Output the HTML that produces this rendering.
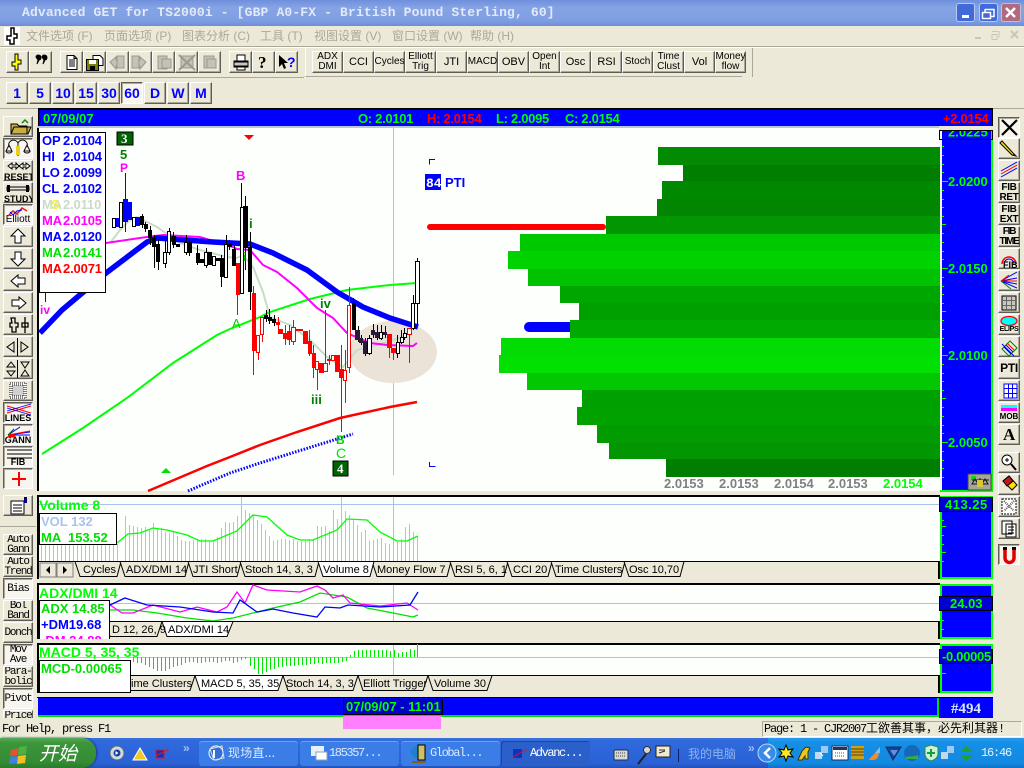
<!DOCTYPE html>
<html><head><meta charset="utf-8"><title>Advanced GET</title>
<style>
html,body{margin:0;padding:0;background:#ece9d8}
#r{position:relative;width:1024px;height:768px;overflow:hidden;background:#ece9d8;font-family:"Liberation Sans","Noto Sans CJK SC",sans-serif}
.a{position:absolute;white-space:pre}
.b{position:absolute;box-sizing:border-box;background:#ece9d8;border:1px solid;border-color:#fff #5f5d54 #5f5d54 #fff;box-shadow:inset -1px -1px #aca899;text-align:center;color:#000;font-size:10px;line-height:10px;white-space:pre;overflow:hidden}
.p{background:#f7f5ee;border-color:#5f5d54 #fff #fff #5f5d54;box-shadow:inset 1px 1px #aca899}
.t{width:31px;height:22px;top:51px;display:flex;align-items:center;justify-content:center}
.f{width:22px;height:22px;top:82px;color:#0000ff;font-weight:bold;font-size:14px;line-height:20px}
.l{left:3px;width:30px;height:21px;font:bold 9px/10px "Liberation Sans",sans-serif;padding-top:10px}
.m{left:3px;width:30px;height:21px;font:11px/10px "Liberation Mono",monospace;letter-spacing:-1.2px;display:flex;align-items:center;justify-content:center}
.r{left:998px;width:22px;height:21px;font:bold 10px/10px "Liberation Sans",sans-serif;padding-top:0;letter-spacing:-.3px}
.mn{top:29px;font-size:12px;line-height:14px;color:#aca899}
svg{position:absolute;left:0;top:0}
.bd{font-weight:bold;font-family:"Liberation Sans",sans-serif}
.tb{font:11px "Liberation Sans",sans-serif;fill:#000}
.ib{position:absolute;box-sizing:border-box;background:#fff;border:1px solid #000;overflow:hidden;font:bold 13px/16px "Liberation Sans",sans-serif}
.ib div{white-space:pre}
.tk{position:absolute;top:741px;height:25px;border-radius:3px;box-sizing:border-box;background:#3b7de6;color:#dde8ff;font:12px/24px "Liberation Mono","Noto Sans CJK SC",monospace;letter-spacing:-1.4px;padding-left:29px;white-space:pre;box-shadow:inset 0 1px #6ea0f0}
.ms{letter-spacing:-1.2px}
</style></head><body><div id="r">

<!-- title bar -->
<div class="a" style="left:0;top:0;width:1024px;height:26px;background:linear-gradient(#6f8fdc,#86a4e4 30%,#7f9ee2 80%,#6c8cd8)"></div>
<div class="a" style="left:22px;top:5px;font:bold 13px/16px 'Liberation Mono',monospace;letter-spacing:.15px;color:#e2eafa">Advanced GET for TS2000i - [GBP A0-FX - British Pound Sterling, 60]</div>
<div class="a" style="left:956px;top:3px;width:19px;height:19px;border-radius:3px;background:#4169d8;border:1px solid #b8c8f0;box-sizing:border-box"></div>
<div class="a" style="left:979px;top:3px;width:19px;height:19px;border-radius:3px;background:#4169d8;border:1px solid #b8c8f0;box-sizing:border-box"></div>
<div class="a" style="left:1001px;top:3px;width:20px;height:19px;border-radius:3px;background:#b06a80;border:1px solid #d0b8c8;box-sizing:border-box"></div>

<!-- menu -->
<div class="a" style="left:0;top:46px;width:1024px;height:1px;background:#aca899"></div>
<div class="a" style="left:0;top:47px;width:1024px;height:1px;background:#fff"></div>
<div class="a mn" style="left:26px">文件选项 (F)</div>
<div class="a mn" style="left:104px">页面选项 (P)</div>
<div class="a mn" style="left:182px">图表分析 (C)</div>
<div class="a mn" style="left:260px">工具 (T)</div>
<div class="a mn" style="left:314px">视图设置 (V)</div>
<div class="a mn" style="left:392px">窗口设置 (W)</div>
<div class="a mn" style="left:470px">帮助 (H)</div>

<!-- toolbar frames -->
<div class="a" style="left:0;top:77px;width:304px;height:1px;background:#aca899"></div>
<div class="a" style="left:305px;top:48px;width:1px;height:30px;background:#fff"></div>
<div class="a" style="left:305px;top:76px;width:437px;height:1px;background:#aca899"></div>
<div class="a" style="left:752px;top:48px;width:1px;height:29px;background:#aca899"></div>
<div class="a" style="left:0;top:108px;width:1024px;height:1px;background:#aca899"></div>

<!-- toolbar 1 buttons -->
<div class="b" style="left:6px;top:51px;width:23px;height:22px"></div>
<div class="b" style="left:29px;top:51px;width:23px;height:22px"></div>
<div class="b" style="left:60px;top:51px;width:23px;height:22px"></div>
<div class="b" style="left:83px;top:51px;width:23px;height:22px"></div>
<div class="b" style="left:106px;top:51px;width:23px;height:22px"></div>
<div class="b" style="left:129px;top:51px;width:23px;height:22px"></div>
<div class="b" style="left:152px;top:51px;width:23px;height:22px"></div>
<div class="b" style="left:175px;top:51px;width:23px;height:22px"></div>
<div class="b" style="left:198px;top:51px;width:23px;height:22px"></div>
<div class="b" style="left:229px;top:51px;width:23px;height:22px"></div>
<div class="b" style="left:252px;top:51px;width:23px;height:22px"></div>
<div class="b" style="left:275px;top:51px;width:23px;height:22px"></div>

<!-- toolbar 2 -->
<div class="b t" style="left:312px">ADX
DMI</div>
<div class="b t" style="left:343px;font-size:11px">CCI</div>
<div class="b t" style="left:374px;font-size:10px">Cycles</div>
<div class="b t" style="left:405px">Elliott
Trig</div>
<div class="b t" style="left:436px;font-size:11px">JTI</div>
<div class="b t" style="left:467px;font-size:10px">MACD</div>
<div class="b t" style="left:498px;font-size:11px">OBV</div>
<div class="b t" style="left:529px">Open
Int</div>
<div class="b t" style="left:560px;font-size:11px">Osc</div>
<div class="b t" style="left:591px;font-size:11px">RSI</div>
<div class="b t" style="left:622px;font-size:10px">Stoch</div>
<div class="b t" style="left:653px">Time
Clust</div>
<div class="b t" style="left:684px;font-size:11px">Vol</div>
<div class="b t" style="left:715px">Money
flow</div>

<!-- timeframe -->
<div class="b f" style="left:6px">1</div>
<div class="b f" style="left:29px">5</div>
<div class="b f" style="left:52px">10</div>
<div class="b f" style="left:75px">15</div>
<div class="b f" style="left:98px">30</div>
<div class="b f p" style="left:121px">60</div>
<div class="b f" style="left:144px">D</div>
<div class="b f" style="left:167px">W</div>
<div class="b f" style="left:190px">M</div>

<!-- left bar -->
<div class="b l" style="top:116px"></div>
<div class="b l p" style="top:138px"></div>
<div class="b l" style="top:160px;padding-top:11px">RESET</div>
<div class="b l" style="top:182px;padding-top:11px">STUDY</div>
<div class="b l p" style="top:204px;padding-top:10px;font-weight:normal;font-size:10px">Elliott</div>
<div class="b l" style="top:226px"></div>
<div class="b l" style="top:248px"></div>
<div class="b l" style="top:270px"></div>
<div class="b l" style="top:292px"></div>
<div class="b l" style="top:314px"></div>
<div class="b l" style="top:336px"></div>
<div class="b l" style="top:358px"></div>
<div class="b l" style="top:380px"></div>
<div class="b l p" style="top:402px;padding-top:10px">LINES</div>
<div class="b l p" style="top:424px;padding-top:10px">GANN</div>
<div class="b l p" style="top:446px;padding-top:10px">FIB</div>
<div class="b l p" style="top:468px"></div>
<div class="b l" style="top:495px"></div>
<div class="a" style="left:0;top:526px;width:36px;height:1px;background:#aca899"></div>
<div class="b m" style="top:534px">Auto
Gann</div>
<div class="b m" style="top:556px">Auto
Trend</div>
<div class="b m p" style="top:578px">Bias</div>
<div class="b m" style="top:600px">Bol
Band</div>
<div class="b m" style="top:622px">Donch</div>
<div class="b m p" style="top:644px">Mov
Ave</div>
<div class="b m" style="top:666px">Para-
bolic</div>
<div class="b m p" style="top:688px">Pivot</div>
<div class="b m" style="top:710px;height:8px;align-items:flex-start;border-bottom:0;box-shadow:none">Price</div>

<!-- right bar -->
<div class="b r p" style="top:117px"></div>
<div class="b r" style="top:138px"></div>
<div class="b r" style="top:160px"></div>
<div class="b r" style="top:182px">FIB
RET</div>
<div class="b r" style="top:204px">FIB
EXT</div>
<div class="b r" style="top:226px;letter-spacing:-1.2px">FIB
TIME</div>
<div class="b r" style="top:248px"></div>
<div class="b r" style="top:270px"></div>
<div class="b r" style="top:292px"></div>
<div class="b r" style="top:314px;padding-top:11px;font-size:7px;line-height:8px">ELIPS</div>
<div class="b r" style="top:336px"></div>
<div class="b r" style="top:358px;font:bold 12px/19px 'Liberation Sans',sans-serif">PTI</div>
<div class="b r" style="top:380px"></div>
<div class="b r" style="top:402px;padding-top:9px;font-size:8px;letter-spacing:0">MOB</div>
<div class="b r" style="top:424px;font:bold 17px/19px 'Liberation Serif',serif">A</div>
<div class="b r" style="top:452px"></div>
<div class="b r" style="top:474px"></div>
<div class="b r" style="top:496px"></div>
<div class="b r" style="top:518px"></div>
<div class="b r p" style="top:544px"></div>

<!-- status + taskbar bases -->
<div class="a" style="left:0;top:738px;width:1024px;height:30px;background:linear-gradient(#3a72dc,#2f69dc 10%,#2a62d6 85%,#2450b4)"></div>
<div class="a" style="left:768px;top:738px;width:256px;height:30px;background:linear-gradient(#2a9aee,#1590e6 15%,#1388e0 85%,#1070c8)"></div>
<div class="a" style="left:0;top:738px;width:96px;height:30px;border-radius:0 14px 14px 0;background:linear-gradient(#56ab56,#3c963c 15%,#348c34 80%,#2a7a2a);box-shadow:1px 0 2px #153a80"></div>
<div class="a" style="left:39px;top:741px;font:italic 19px/24px 'Noto Sans CJK SC',sans-serif;color:#fff">开始</div>
<div class="tk" style="left:199px;width:99px;font-family:'Noto Sans CJK SC',sans-serif;font-size:12px;letter-spacing:.2px">现场直...</div>
<div class="tk" style="left:300px;width:99px">185357...</div>
<div class="tk" style="left:401px;width:99px">Global...</div>
<div class="tk" style="left:501px;width:89px;background:#2b5fca;box-shadow:inset 1px 1px #1d459c;color:#fff">Advanc...</div>
<div class="a" style="left:688px;top:746px;font:12px/16px 'Noto Sans CJK SC',sans-serif;color:#8db2ec">我的电脑</div>
<div class="a" style="left:748px;top:741px;font:bold 12px/14px 'Liberation Sans',sans-serif;color:#9cc0f4">»</div>
<div class="a" style="left:183px;top:741px;font:bold 12px/14px 'Liberation Sans',sans-serif;color:#9cc0f4">»</div>
<div class="a" style="left:981px;top:745px;font:12px/16px 'Liberation Mono',monospace;letter-spacing:-1.2px;color:#e6f2ff">16:46</div>

<div class="a" style="left:2px;top:722px;font:12px/15px 'Liberation Mono',monospace;letter-spacing:-1.2px;color:#000">For Help, press F1</div>
<div class="a" style="left:762px;top:721px;width:260px;height:16px;box-sizing:border-box;border:1px solid;border-color:#aca899 #fff #fff #aca899;font:12px/14px 'Liberation Mono','Noto Sans CJK SC',monospace;padding-left:1px;color:#000;overflow:hidden"><span class="ms">Page: 1 - CJR2007</span>工欲善其事，必先利其器<span class="ms">!</span></div>

<svg width="1024" height="768" viewBox="0 0 1024 768" xmlns="http://www.w3.org/2000/svg">
<defs>
<pattern id="vb" x="1" y="0" width="4" height="20" patternUnits="userSpaceOnUse"><rect x="0" y="0" width="1" height="20" fill="#a8c4ec"/></pattern>
</defs>

<!-- header bar -->
<g shape-rendering="crispEdges">
<rect x="38" y="108" width="955" height="18" fill="#000"/>
<rect x="39" y="110" width="953" height="16" fill="#0000ff"/>
<!-- main chart -->
<rect x="37" y="126" width="903" height="365" fill="#fdfffd"/>
<rect x="37" y="126" width="2" height="365" fill="#000"/>
<rect x="37" y="126" width="903" height="2" fill="#b8c8d8"/>
<rect x="393" y="128" width="1" height="347" fill="#a8c4ec"/>
</g>
<ellipse cx="393" cy="352" rx="44" ry="31" fill="#ece3d8"/>

<!-- green profile bars -->
<g shape-rendering="crispEdges">
<rect x="658" y="147" width="282" height="18" fill="#028a02"/>
<rect x="683" y="165" width="257" height="16" fill="#007e00"/>
<rect x="662" y="181" width="278" height="18" fill="#018801"/>
<rect x="657" y="199" width="283" height="17" fill="#028602"/>
<rect x="606" y="216" width="334" height="18" fill="#029602"/>
<rect x="520" y="234" width="420" height="17" fill="#00c800"/>
<rect x="508" y="251" width="432" height="18" fill="#00d200"/>
<rect x="528" y="269" width="412" height="17" fill="#00c200"/>
<rect x="560" y="286" width="380" height="17" fill="#00a600"/>
<rect x="579" y="303" width="361" height="17" fill="#00a000"/>
<rect x="570" y="320" width="370" height="18" fill="#00aa00"/>
<rect x="501" y="338" width="439" height="17" fill="#02dc02"/>
<rect x="499" y="355" width="441" height="18" fill="#02e002"/>
<rect x="527" y="373" width="413" height="17" fill="#02c802"/>
<rect x="582" y="390" width="358" height="17" fill="#00a000"/>
<rect x="577" y="407" width="363" height="18" fill="#00a200"/>
<rect x="597" y="425" width="343" height="18" fill="#029c02"/>
<rect x="609" y="443" width="331" height="16" fill="#029602"/>
<rect x="666" y="459" width="274" height="18" fill="#007e00"/>
</g>
<rect x="427" y="224" width="179" height="6" rx="3" fill="#ff0000"/>
<rect x="524" y="322" width="46" height="10" rx="5" fill="#0000ff"/>
<rect x="560" y="322" width="10" height="10" fill="#0000ff"/>
<path d="M435 159.500h-5.500v5M429.500 462v4.500h6" fill="none" stroke="#0000ff"/>
<rect x="425" y="174" width="16" height="16" fill="#0000ff"/>
<text x="426" y="187" class="bd" font-size="13" fill="#fff" style="font-family:'Liberation Mono',monospace">84</text>
<text x="445" y="187" class="bd" font-size="13" fill="#0000ff">PTI</text>
<g class="bd" font-size="13" fill="#808080">
<text x="664" y="488">2.0153</text><text x="719" y="488">2.0153</text><text x="774" y="488">2.0154</text><text x="828" y="488">2.0153</text><text x="883" y="488" fill="#00ff00">2.0154</text>
</g>

<!-- moving averages -->
<polyline points="110 243 120 230 130 220 137 217 157 227 180 243 200 250 227 257 237 258 243 255 253 267 263 292 270 317 290 325 310 340 327 357 343 367 357 350 370 347 403 337 413 328" fill="none" stroke="#c8dcc8" stroke-width="2"/>
<polyline points="148 491 207 466 230 457 260 445 297 432 340 418 390 407 417 402" fill="none" stroke="#ff0000" stroke-width="2.500"/>
<polyline points="42 454 83 428 127 398 173 363 217 335 230 329 260 317 270 312 310 299 347 290 390 285 417 283" fill="none" stroke="#00ff00" stroke-width="2"/>
<polyline points="188 491 230 473 260 463 353 434" fill="none" stroke="#0000ff" stroke-width="3" stroke-dasharray="1.500 1.500"/>
<polyline points="106 243 147 237 163 235 200 237 233 247 237 249 250 250 263 265 277 272 297 288 317 308 333 318 347 333 370 343 387 345 413 346 417 343" fill="none" stroke="#ff00ff" stroke-width="2"/>
<polyline points="40 333 62 310 106 273 147 242 157 238 213 242 250 244 273 253 307 270 337 292 363 307 390 318 418 327" fill="none" stroke="#0000ff" stroke-width="5.500"/>

<!-- wicks -->
<g shape-rendering="crispEdges" stroke-width="1" fill="none">
<path stroke="#0000ff" d="M125.500 173V232M45.500 292V302"/>
<path stroke="#000" d="M142.500 214V228M145.500 222V232M150.500 226V245M154.500 235V268M158.500 240V270M165.500 240V268M169.500 228V255M173.500 232V248M186.500 235V255M189.500 238V256M197.500 245V265M206.500 248V268M221.500 255V287M226.500 235V278M229.500 240V250M234.500 245V266M241.500 183V294M245.500 196V270M250.500 232V310M266.500 310V322M269.500 309V324M274.500 315V326M353.500 298V330M358.500 326V342M361.500 335V345M365.500 338V356M369.500 335V355M373.500 324V338M377.500 325V340M381.500 325V340M385.500 326V338M397.500 335V358M401.500 330V344M404.500 328V340M413.500 295V330M417.500 258V324"/>
<path stroke="#ff0000" d="M237.500 295V315M253.500 286V375M258.500 353V360M262.500 335V342M278.500 317V334M285.500 325V345M289.500 325V345M293.500 320V345M309.500 330V356M313.500 345V378M317.500 363V390M325.500 310V363M329.500 355V365M341.500 345V432M345.500 350V403M349.500 287V373M389.500 348V358M393.500 353V360M409.500 334V363"/>
</g>
<!-- bodies -->
<g shape-rendering="crispEdges">
<path fill="#000" d="M140 216h4v9h-4zM144 224h4v5h-4zM148 230h4v8h-4zM152 238h4v9h-4zM156 244h4v18h-4zM172 236h4v9h-4zM176 244h4v3h-4zM188 242h4v11h-4zM196 253h4v10h-4zM200 259h4v4h-4zM208 252h4v13h-4zM216 258h4v3h-4zM220 258h4v19h-4zM228 244h4v3h-4zM232 249h4v17h-4zM243 206h5v42h-5zM248 247h4v45h-4zM264 315h4v4h-4zM268 317h4v4h-4zM272 319h4v4h-4zM352 303h4v27h-4z"/>
<path fill="#2a1a3a" d="M355 330h5v10h-5zM359 338h4v5h-4zM363 341h4v13h-4zM371 330h4v5h-4zM375 332h4v6h-4zM383 332h4v3h-4z"/>
<path fill="#0000ff" d="M116 218h4v9h-4zM123 199h5v23h-5zM128 202h4v18h-4zM136 217h4v9h-4z"/>
<path fill="#ff0000" d="M236 263h4v32h-4zM252 293h4v58h-4zM276 322h4v3h-4zM279 329h4v5h-4zM283 333h4v6h-4zM287 331h4v9h-4zM296 329h3v2h-3zM299 329h4v2h-4zM303 331h5v13h-5zM308 341h4v13h-4zM312 353h4v15h-4zM319 363h5v10h-5zM327 359h5v2h-5zM335 355h5v17h-5zM339 369h5v9h-5zM387 334h5v14h-5zM391 348h5v5h-5z"/>
<path fill="#fff" stroke="#000" d="M112.500 218.500h3v9h-3zM119.500 202.500h3v25h-3zM132.500 217.500h3v9h-3zM163.500 252.500h3v11h-3zM167.500 231.500h3v21h-3zM184.500 242.500h3v10h-3zM204.500 252.500h3v13h-3zM212.500 256.500h3v9h-3zM224.500 244.500h3v33h-3zM240.500 207.500h3v86h-3zM367.500 338.500h4v15h-4zM379.500 332.500h3v6h-3zM396.500 342.500h3v11h-3zM400.500 337.500h3v5h-3zM403.500 333.500h3v4h-3zM411.500 303.500h3v25h-3zM415.500 261.500h4v42h-4z"/>
<path fill="#fff" stroke="#ff0000" d="M256.500 335.500h3v17h-3zM260.500 317.500h3v17h-3zM291.500 327.500h4v14h-4zM315.500 361.500h3v8h-3zM323.500 363.500h4v8h-4zM331.500 355.500h3v5h-3zM343.500 370.500h3v10h-3zM347.500 305.500h3v62h-3zM407.500 328.500h4v6h-4z"/>
</g>

<!-- labels on chart -->
<rect x="117" y="132" width="16" height="13" fill="#006400" stroke="#000"/>
<text x="121" y="143" class="bd" font-size="13" fill="#fff" style="font-family:'Liberation Serif',serif">3</text>
<text x="120" y="159" class="bd" font-size="13" fill="#008000">5</text>
<text x="120" y="172" class="bd" font-size="12" fill="#ff00ff">P</text>
<text x="236" y="180" class="bd" font-size="13" fill="#ff00ff">B</text>
<text x="249" y="228" class="bd" font-size="13" fill="#008000">i</text>
<text x="243" y="261" class="bd" font-size="12" fill="#00c000">i</text>
<text x="232" y="328" font-size="13" fill="#00d000">A</text>
<text x="40" y="314" class="bd" font-size="12" fill="#ff00ff">iv</text>
<text x="320" y="308" class="bd" font-size="13" fill="#008000">iv</text>
<text x="311" y="404" class="bd" font-size="13" fill="#008000">iii</text>
<text x="336" y="444" class="bd" font-size="12" fill="#00d000">B</text>
<text x="336" y="458" font-size="14" fill="#00e000">C</text>
<rect x="333" y="461" width="15" height="15" fill="#006400" stroke="#000"/>
<text x="337" y="473" class="bd" font-size="13" fill="#fff" style="font-family:'Liberation Serif',serif">4</text>
<path d="M161 473l5-5 5 5z" fill="#00e000"/>
<path d="M244 135h10l-5 5z" fill="#ff0000"/>

<!-- main scale -->
<g shape-rendering="crispEdges">
<rect x="940" y="126" width="53" height="366" fill="#00ff00"/>
<rect x="940" y="128" width="2" height="362" fill="#f0f8f0"/>
<rect x="942" y="128" width="49" height="362" fill="#0000ff"/>
<path stroke="#00ff00" fill="none" d="M942 181.500h6M942 268.500h6M942 355.500h6M942 442.500h6M942 224.500h4M942 311.500h4M942 398.500h4M942 146.500h2M942 155.500h2M942 164.500h2M942 172.500h2M942 190.500h2M942 199.500h2M942 207.500h2M942 216.500h2M942 233.500h2M942 242.500h2M942 251.500h2M942 259.500h2M942 277.500h2M942 286.500h2M942 294.500h2M942 303.500h2M942 320.500h2M942 329.500h2M942 338.500h2M942 346.500h2M942 364.500h2M942 373.500h2M942 381.500h2M942 390.500h2M942 407.500h2M942 416.500h2M942 425.500h2M942 433.500h2M942 451.500h2M942 460.500h2M942 468.500h2M942 477.500h2"/>
</g>
<g class="bd" font-size="13" fill="#00ff00">
<text x="948" y="186">2.0200</text><text x="948" y="273">2.0150</text><text x="948" y="360">2.0100</text><text x="948" y="447">2.0050</text>
<text x="948" y="136.500">2.0225</text>
</g>
<rect x="939" y="126" width="54" height="5" fill="#ece9d8"/>
<rect x="939.500" y="130.500" width="53" height="9" fill="none" stroke="#000"/>
<!-- bias icon -->
<rect x="968" y="474" width="23" height="16" fill="#a8a69c" stroke="#444"/>
<rect x="971" y="476" width="5" height="4" fill="#00e000"/>
<path d="M972 484l3-5 3 5zM982 484l3-5 3 5zM972 480h17M980 478v9" fill="none" stroke="#111"/>
<rect x="977" y="480" width="6" height="7" fill="#d8c838"/>

<!-- Volume panel -->
<g shape-rendering="crispEdges">
<rect x="37" y="495" width="903" height="84" fill="#fdfffd"/>
<rect x="37" y="495" width="903" height="2" fill="#000"/>
<rect x="37" y="495" width="2" height="84" fill="#000"/>
<path stroke="#a8c4ec" fill="none" d="M39 504.500H940M241.500 497V561M341.500 497V561M393.500 497V561"/>
<rect x="40" y="544" width="78" height="17" fill="url(#vb)"/>
<path stroke="#a8c4ec" fill="none" d="M125.500 561V516M129.500 561V525M133.500 561V526M137.500 561V527M141.500 561V528M145.500 561V527M149.500 561V530M153.500 561V523M157.500 561V528M161.500 561V528M165.500 561V532M169.500 561V533M173.500 561V532M177.500 561V536M181.500 561V540M185.500 561V541M189.500 561V541M193.500 561V540M197.500 561V539M201.500 561V539M205.500 561V539M209.500 561V541M213.500 561V541M217.500 561V537M221.500 561V528M225.500 561V522M229.500 561V523M233.500 561V522M237.500 561V516M241.500 561V501M245.500 561V510M249.500 561V513M253.500 561V515M257.500 561V520M261.500 561V524M265.500 561V530M269.500 561V536M273.500 561V541M277.500 561V540M281.500 561V539M285.500 561V539M289.500 561V540M293.500 561V539M297.500 561V541M301.500 561V541M305.500 561V541M309.500 561V539M313.500 561V540M317.500 561V526M321.500 561V527M325.500 561V526M329.500 561V531M333.500 561V510M337.500 561V519M341.500 561V500M345.500 561V511M349.500 561V515M353.500 561V520M357.500 561V525M361.500 561V532M365.500 561V530M369.500 561V541M373.500 561V540M377.500 561V539M381.500 561V538M385.500 561V543M389.500 561V544M393.500 561V538M397.500 561V542M401.500 561V539M405.500 561V527M409.500 561V524M413.500 561V532M417.500 561V537"/>
</g>
<polyline points="117 543 128 534 140 533 153 528 167 530 187 535 200 541 213 541 237 531 253 515 267 517 287 535 300 540 313 540 337 530 347 519 367 520 380 532 397 541 407 541 418 536" fill="none" stroke="#00ff00" stroke-width="1.300"/>
<g shape-rendering="crispEdges">
<rect x="39" y="561" width="901" height="18" fill="#ece9d8"/>
<rect x="39" y="561" width="900" height="1" fill="#000"/>
<rect x="938" y="561" width="2" height="18" fill="#000"/>
<rect x="40" y="563" width="16" height="14" fill="#ece9d8" stroke="#808080"/>
<rect x="57" y="563" width="16" height="14" fill="#ece9d8" stroke="#808080"/>
</g>
<path d="M50 566v8l-4-4zM63 566v8l4-4z" fill="#000"/>
<g stroke="#000" fill="#ece9d8">
<path d="M75 561.500l5 15h37l4-15z"/>
<path d="M120 561.500l5 15h60l4-15z"/>
<path d="M188 561.500l5 15h44l4-15z"/>
<path d="M240 561.500l5 15h70l4-15z"/>
<path d="M372 561.500l5 15h70l4-15z"/>
<path d="M450 561.500l5 15h49l4-15z"/>
<path d="M507 561.500l5 15h36l4-15z"/>
<path d="M551 561.500l5 15h65l4-15z"/>
<path d="M624 561.500l5 15h51l4-15z"/>
<path d="M318 561.500l5 15h47l4-15z" fill="#fff"/>
</g>
<g class="tb">
<text x="83" y="573">Cycles</text><text x="126" y="573">ADX/DMI 14</text><text x="193" y="573">JTI Short</text><text x="245" y="573">Stoch 14, 3, 3</text><text x="323" y="573">Volume 8</text><text x="377" y="573">Money Flow 7</text><text x="455" y="573">RSI 5, 6, 1</text><text x="513" y="573">CCI 20</text><text x="555" y="573">Time Clusters</text><text x="629" y="573">Osc 10,70</text>
</g>
<text x="39" y="510" class="bd" font-size="14" fill="#00ff00">Volume 8</text>
<g shape-rendering="crispEdges">
<rect x="940" y="496" width="53" height="83" fill="#00ff00"/>
<rect x="942" y="498" width="49" height="79" fill="#0000ff"/>
<rect x="939.500" y="497.500" width="53" height="14" fill="#0000d0" stroke="#000"/>
<path stroke="#00ff00" fill="none" d="M942 526.500h4M942 552.500h4M942 520.500h2M942 535.500h2M942 544.500h2M942 561.500h2"/>
</g>
<text x="945" y="509" class="bd" font-size="13" fill="#00ff00" letter-spacing=".5">413.25</text>

<!-- ADX panel -->
<g shape-rendering="crispEdges">
<rect x="37" y="583" width="903" height="56" fill="#fdfffd"/>
<rect x="37" y="583" width="903" height="2" fill="#000"/>
<rect x="37" y="583" width="2" height="56" fill="#000"/>
<path stroke="#a8c4ec" fill="none" d="M39 603.500H940M393.500 585V621"/>
</g>
<polyline points="110 610 133 610 157 613 187 618 213 621 233 618 273 608 300 602 320 593 347 597 367 608 393 613 413 617 418 615" fill="none" stroke="#00e000" stroke-width="1.300"/>
<polyline points="110 605 122 613 133 613 153 605 180 612 197 607 217 612 227 607 237 592 245 603 253 585 267 590 300 592 317 586 325 590 333 598 343 595 350 603 380 606 407 603 418 610" fill="none" stroke="#ff00ff" stroke-width="1.300"/>
<polyline points="110 605 125 598 147 605 180 607 213 612 233 613 240 600 257 612 273 609 293 613 317 617 325 607 340 608 348 605 380 607 410 605 418 592" fill="none" stroke="#0000ff" stroke-width="1.300"/>
<rect x="39" y="621" width="901" height="18" fill="#ece9d8" shape-rendering="crispEdges"/>
<rect x="39" y="621" width="900" height="1" fill="#000" shape-rendering="crispEdges"/>
<rect x="938" y="621" width="2" height="18" fill="#000" shape-rendering="crispEdges"/>
<path d="M105 621.500l5 15h47l5-15z" fill="#ece9d8" stroke="#000"/>
<path d="M162 621.500l5 15h60l6-15z" fill="#fff" stroke="#000"/>
<text x="112" y="633" class="tb">D 12, 26, 9</text>
<text x="168" y="633" class="tb">ADX/DMI 14</text>
<text x="39" y="598" class="bd" font-size="14" fill="#00ff00">ADX/DMI 14</text>
<g shape-rendering="crispEdges">
<rect x="940" y="584" width="53" height="55" fill="#00ff00"/>
<rect x="942" y="586" width="49" height="51" fill="#0000ff"/>
<rect x="939.500" y="596.500" width="53" height="14" fill="#0000d0" stroke="#000"/>
<path stroke="#00ff00" fill="none" d="M942 620.500h2M942 629.500h2"/>
</g>
<text x="950" y="608" class="bd" font-size="13" fill="#00ff00">24.03</text>

<!-- MACD panel -->
<g shape-rendering="crispEdges">
<rect x="37" y="643" width="903" height="50" fill="#fdfffd"/>
<rect x="37" y="643" width="903" height="2" fill="#000"/>
<rect x="37" y="643" width="2" height="50" fill="#000"/>
<path stroke="#a8c4ec" fill="none" d="M39 657.500H940M393.500 645V675"/>
<path stroke="#00e800" fill="none" d="M133.500 657v5M137.500 657v6M141.500 657v6M145.500 657v8M149.500 657v10M153.500 657v12M157.500 657v14M161.500 657v14M165.500 657v14M169.500 657v12M173.500 657v10M177.500 657v9M181.500 657v8M185.500 657v6M189.500 657v5M193.500 657v5M197.500 657v6M201.500 657v6M205.500 657v5M209.500 657v5M213.500 657v5M217.500 657v6M221.500 657v5M225.500 657v4M229.500 657v4M233.500 657v6M237.500 657v5M241.500 657v3M245.500 657v2M250.500 657v9M254.500 657v12M258.500 657v17M262.500 657v17M266.500 657v15M270.500 657v13M274.500 657v12M278.500 657v10M282.500 657v10M286.500 657v9M290.500 657v9M294.500 657v9M298.500 657v8M302.500 657v8M306.500 657v8M310.500 657v7M314.500 657v7M318.500 657v6M322.500 657v7M326.500 657v6M330.500 657v6M334.500 657v6M338.500 657v6M342.500 657v5M346.500 657v4M350.500 657v-2M354.500 657v-6M358.500 657v-7M362.500 657v-7M366.500 657v-7M370.500 657v-7M374.500 657v-7M378.500 657v-7M382.500 657v-7M386.500 657v-7M390.500 657v-6M394.500 657v-7M398.500 657v-4M402.500 657v-5M406.500 657v-5M410.500 657v-8M414.500 657v-7M417.500 657v-13"/>
<rect x="39" y="675" width="901" height="18" fill="#ece9d8"/>
<rect x="39" y="675" width="900" height="1" fill="#000"/>
<rect x="938" y="675" width="2" height="18" fill="#000"/>
</g>
<path d="M125 675.500l5 15h60l5-15z" fill="#ece9d8" stroke="#000"/>
<path d="M283 675.500l5 15h65l5-15z" fill="#ece9d8" stroke="#000"/>
<path d="M358 675.500l5 15h60l5-15z" fill="#ece9d8" stroke="#000"/>
<path d="M428 675.500l5 15h54l5-15z" fill="#ece9d8" stroke="#000"/>
<path d="M195 675.500l5 15h78l5-15z" fill="#fff" stroke="#000"/>
<g class="tb">
<text x="131" y="687">ime Clusters</text><text x="201" y="687">MACD 5, 35, 35</text><text x="286" y="687">Stoch 14, 3, 3</text><text x="363" y="687">Elliott Trigger</text><text x="434" y="687">Volume 30</text>
</g>
<text x="39" y="657" class="bd" font-size="14" fill="#00ff00">MACD 5, 35, 35</text>
<g shape-rendering="crispEdges">
<rect x="940" y="644" width="53" height="49" fill="#00ff00"/>
<rect x="942" y="646" width="49" height="45" fill="#0000ff"/>
<rect x="939.500" y="649.500" width="53" height="14" fill="#0000d0" stroke="#000"/>
<path stroke="#00ff00" fill="none" d="M942 673.500h4"/>
</g>
<text x="942" y="661" class="bd" font-size="13" fill="#00ff00" letter-spacing="-.3">-0.00005</text>

<!-- bottom bar -->
<g shape-rendering="crispEdges">
<rect x="37" y="697" width="956" height="1" fill="#000"/>
<rect x="38" y="698" width="901" height="17" fill="#0000ff"/>
<rect x="38" y="715" width="901" height="2" fill="#00e000"/>
<rect x="937" y="698" width="2" height="19" fill="#00e000"/>
<rect x="939" y="698" width="54" height="20" fill="#0000ff"/>
<rect x="343" y="716" width="98" height="13" fill="#ff80ff"/>
<rect x="343.500" y="699.500" width="99" height="15" fill="#0000c8" stroke="#000"/>
</g>
<text x="346" y="711" class="bd" font-size="13" fill="#00ff00">07/09/07 - 11:01</text>
<text x="951" y="713" class="bd" font-size="15" fill="#d8e8ff" style="font-family:'Liberation Serif',serif">#494</text>

<!-- header text -->
<g class="bd" font-size="13" fill="#00ff00">
<text x="43" y="123">07/09/07</text>
<text x="358" y="123" letter-spacing="-.3">O: 2.0101</text>
<text x="427" y="123" letter-spacing="-.3" fill="#ff0000">H: 2.0154</text>
<text x="496" y="123" letter-spacing="-.3">L: 2.0095</text>
<text x="565" y="123" letter-spacing="-.3">C: 2.0154</text>
<text x="943" y="123" letter-spacing="-.3" fill="#ff0000">+2.0154</text>
</g>

<!-- window controls -->
<rect x="962" y="15" width="7" height="3" fill="#fff"/>
<path d="M985 9.500h9v7h-3M982.500 12.500h8v6h-8z M985 9v3" fill="none" stroke="#fff" stroke-width="1.500"/>
<path d="M1006 8l9 9M1015 8l-9 9" stroke="#fff" stroke-width="2.500"/>
<path d="M975 38h6" stroke="#c8c6b8" stroke-width="2"/>
<path d="M992 31.500h7v6M992 34.500h5v5h-5z" fill="none" stroke="#c8c6b8"/>
<path d="M1011 31l7 7M1018 31l-7 7" stroke="#c8c6b8" stroke-width="2"/>

<!-- menu icon -->
<rect x="4" y="27" width="16" height="18" fill="#fff"/>
<path d="M11 28h3v6h3v4h-3v6h-4v-4h-3v-4h4z" fill="#fff" stroke="#000" stroke-width="1.500"/>

<!-- toolbar 1 icons -->
<path d="M15 54h3v6h3v4h-3v6h-3v-4h-3v-4h3z" fill="#ffff00" stroke="#000"/>
<path d="M36 57a2.500 2.500 0 1 1 3 3l-2 4 1-4zM42 57a2.500 2.500 0 1 1 3 3l-2 4 1-4z" fill="#000" stroke="#000"/>
<path d="M67 55.500h7l3 3v11h-10zM74 55.500v3h3M69 60h6M69 62h6M69 64h6M69 66h6" fill="#fff" stroke="#000"/>
<path d="M93 55.500h7l3 3v7h-10z" fill="#fff" stroke="#000"/>
<rect x="86.500" y="59.500" width="12" height="11" fill="#808000" stroke="#000"/>
<rect x="89" y="60" width="7" height="4" fill="#fff"/>
<rect x="90" y="66" width="5" height="4" fill="#000"/>
<g fill="#c4c2b6" stroke="#9c9a8e">
<path d="M110 62l6-5v3h7v6h-7v3z"/><rect x="117" y="56" width="7" height="12"/>
<path d="M146 62l-6-5v3h-7v6h7v3z"/><rect x="132" y="56" width="7" height="12"/>
<rect x="158" y="56" width="9" height="13"/><rect x="162" y="59" width="9" height="9"/>
<rect x="181" y="56" width="12" height="12"/><path d="M179 55l16 15M195 55l-16 15" fill="none" stroke-width="2"/>
<rect x="204" y="56" width="10" height="12"/><rect x="207" y="59" width="9" height="9"/>
</g>
<path d="M234 61h14v6h-14zM237 61v-6h8v6M237 67v3h8v-3" fill="#fff" stroke="#000"/>
<rect x="234" y="62" width="14" height="4" fill="#c8c6b8" stroke="#000"/>
<text x="258" y="68" font-size="17" class="bd" fill="#000" style="font-family:'Liberation Serif',serif">?</text>
<path d="M279 55v12l3-3 2 5 2-1-2-5h4z" fill="#000"/>
<text x="287" y="67" font-size="14" class="bd" fill="#0000ff">?</text>

<!-- left bar icons -->
<path d="M11 134v-10h6l2 2h8v8zM11 134l3-7h17l-3 7z" fill="#c8b040" stroke="#000"/>
<path d="M22 123l3-3 3 3" fill="none" stroke="#0a8a0a" stroke-width="1.500"/>
<path d="M18 142v14M18 143a4 4 0 0 0-9 4M18 143a4 4 0 0 1 9 4M6 151l3-6 3 6zM24 151l3-6 3 6zM6 151a3 2 0 0 0 6 0M24 151a3 2 0 0 0 6 0" fill="none" stroke="#111"/>
<rect x="16" y="146" width="4" height="9" fill="#e8d020"/>
<path d="M8 166l4-3v2h4v-2l3 3-3 3v-2h-4v2zM19 166l4-3v2h3v-2l4 3-4 3v-2h-3v2z" fill="#fff" stroke="#000"/>
<rect x="7" y="187" width="22" height="3" fill="#ece9d8" stroke="#000"/>
<rect x="7" y="185" width="3" height="7" fill="#000"/><rect x="26" y="185" width="3" height="7" fill="#000"/>
<path d="M8 216l5-5 4 3 5-6 5 3" fill="none" stroke="#e02020" stroke-width="1.500"/>
<path d="M10 212l3 3 4-4 5-1" fill="none" stroke="#0000ff"/>
<g fill="#fff" stroke="#000">
<path d="M18 229l7 7h-4v7h-6v-7h-4z"/>
<path d="M18 266l7-7h-4v-7h-6v7h-4z"/>
<path d="M11 281l7-6v3h7v6h-7v3z"/>
<path d="M26 303l-7-6v3h-7v6h7v3z"/>
</g>
<path d="M11 318h4v5h3v4h-2v5h-4v-5h-2v-4h2zM25 317v16M22 323h6v4h-6z" fill="#ece9d8" stroke="#000" stroke-width="1.300"/>
<path d="M17.500 338v18M14 342l-7 5 7 5zM21 342l7 5-7 5z" fill="none" stroke="#000"/>
<path d="M17.500 360v18M7 367h8l-4-5zM7 371h8l-4 5zM21 362h8l-4 6zM21 376h8l-4-6z" fill="none" stroke="#000"/>
<rect x="10" y="383" width="16" height="15" fill="#fff" stroke="#000" stroke-dasharray="1 1"/>
<rect x="12" y="385" width="12" height="11" fill="#d0d0d0" stroke="#000" stroke-dasharray="1 1"/>
<path d="M7 406l24 7M7 413l24-7" stroke="#ff0000" fill="none"/>
<path d="M7 408l24 7M7 411l24-7" stroke="#0000ff" fill="none" stroke-width=".8"/>
<path d="M8 435l12-8M8 435l22-3M8 435h22M8 435l6-6" stroke="#0000ff" fill="none"/>
<path d="M8 435l22-4" stroke="#ff0000" fill="none"/><path d="M8 436h7" stroke="#ff0000" stroke-width="3"/>
<path d="M8 435l6-6" stroke="#008000"/>
<path d="M7 450h25M7 454h25M7 458h25" stroke="#000" fill="none"/>
<path d="M19 472v14M12 479h14" stroke="#ff0000" stroke-width="2"/>
<path d="M11 501h13v13h-13z" fill="#fff" stroke="#000"/>
<path d="M13 505h9M13 508h9M13 511h9" stroke="#000"/>
<path d="M24 497h3v6h-3z" fill="#000080"/>

<!-- right bar icons -->
<path d="M1002 120l15 15M1017 120l-15 15" stroke="#000" stroke-width="2.200"/>
<path d="M1002 141l11 12 3 3-4-1-12-12z" fill="#ffe000" stroke="#000"/>
<path d="M1013 153l3 3-3-1z" fill="#800000"/>
<path d="M1001 174l16-9" stroke="#ff0000"/><path d="M1001 171l16-9M1001 177l16-9" stroke="#0000ff"/>
<path d="M1002 264a7 7 0 0 1 14 0" fill="none" stroke="#ff0000" stroke-width="1.500"/>
<path d="M1004 264a5 5 0 0 1 10 0" fill="none" stroke="#0000ff"/>
<text x="1003" y="268" font-size="9" class="bd" fill="#000">FIB</text>
<path d="M1001 281l16-9M1001 281l16-3M1001 281l16 3M1001 281l16 7" stroke="#0000ff" fill="none"/>
<path d="M1001 281h16M1001 281l8-6" stroke="#ff0000" fill="none"/>
<path d="M1001 281l10 8" stroke="#008000" fill="none"/>
<rect x="1002" y="296" width="14" height="14" fill="#c8c8c0" stroke="#000"/>
<path d="M1002 300.500h14M1002 305.500h14M1006.500 296v14M1011.500 296v14" stroke="#666" fill="none"/>
<ellipse cx="1009" cy="321" rx="8" ry="4.500" fill="#00ffff" stroke="#ff0000" stroke-width="1.300"/>
<path d="M1002 349l8-8 7 7-8 8z" fill="#ece9d8" stroke="#008000"/>
<path d="M1004 347l7 7M1006 345l7 7M1002 344l12 12" stroke="#0000ff" fill="none"/>
<path d="M1007 343l7 7" stroke="#ff0000"/>
<rect x="1004" y="384" width="13" height="14" fill="#fff" stroke="#0000ff"/>
<path d="M1004 388.500h13M1004 393.500h13M1008.500 384v14M1012.500 384v14" stroke="#0000ff" fill="none"/>
<rect x="1001" y="405" width="16" height="3" fill="#00ffff"/><rect x="1001" y="408" width="16" height="3" fill="#ff00ff"/>
<circle cx="1007" cy="460" r="5" fill="#fff" stroke="#000"/><path d="M1005 460h4M1007 458v4" stroke="#000"/>
<path d="M1011 464l5 6" stroke="#000" stroke-width="2"/>
<path d="M1003 481l6-5 8 9-5 5z" fill="#ffe000" stroke="#000"/><path d="M1003 481l6-5 4 5-6 5z" fill="#c01818" stroke="#000"/>
<rect x="1002" y="499" width="14" height="15" fill="#fff" stroke="#000" stroke-dasharray="2 1"/>
<path d="M1004 501l10 10M1014 501l-10 10" stroke="#555" stroke-width="2" stroke-dasharray="1 1"/>
<path d="M1002 521h10v13h-10zM1006 524h10v13h-10z" fill="#fff" stroke="#000"/>
<path d="M1008 527h6M1008 530h6M1008 533h6" stroke="#000"/>
<path d="M1005 548v10a4 4 0 0 0 9 0v-10" fill="none" stroke="#e00000" stroke-width="3.500"/>
<rect x="1003" y="547" width="4" height="3" fill="#000"/><rect x="1012" y="547" width="4" height="3" fill="#000"/>

<!-- taskbar icons -->
<g>
<path d="M11 750l7-2v7l-8 1z" fill="#e85030"/><path d="M19 747l8-1-1 8-8 1z" fill="#50b040"/>
<path d="M10 757l8-1-1 7-8 1z" fill="#4080e0"/><path d="M18 756l8-1-1 8-8 1z" fill="#f0c020"/>
<circle cx="117" cy="753" r="7" fill="#d0d8e0" stroke="#606870"/><circle cx="117" cy="753" r="3.500" fill="#1040a0"/><path d="M115.500 751v4l3-2z" fill="#fff"/>
<path d="M133 760l7-12 7 12z" fill="#f0c828" stroke="#fff"/>
<path d="M156 756l13-7M156 750h8v8h-8z" fill="#1030c0" stroke="#e01818"/>
<circle cx="216" cy="753" r="7" fill="#3070d8" stroke="#fff"/><path d="M214 750v8" stroke="#fff" stroke-width="2"/><path d="M210 749l12-3 2 12-10 2z" fill="none" stroke="#ddd"/>
<rect x="311" y="746" width="13" height="10" fill="#e8f0f8"/><rect x="316" y="752" width="11" height="8" fill="#fff" stroke="#90a0b0"/>
<circle cx="417" cy="752" r="6" fill="#2080d0"/><rect x="418" y="745" width="7" height="15" fill="#d0c060" stroke="#000"/><rect x="412" y="761" width="14" height="2" fill="#806020"/>
<path d="M513 749h9v9h-9z" fill="#1030c0"/><path d="M513 757l14-8" stroke="#e01818" fill="none"/>
<rect x="614" y="750" width="14" height="10" rx="1" fill="#d8d8d8" stroke="#203040"/><path d="M616 753h10M616 756h10" stroke="#404040" stroke-dasharray="1 1"/>
<path d="M638 764l8-10" stroke="#202020" stroke-width="2"/><circle cx="647" cy="750" r="3.500" fill="#d8d8d8" stroke="#303030"/>
<rect x="656" y="746" width="14" height="11" fill="#f0ead0" stroke="#202020"/><path d="M659 750h6M659 753l6-2" stroke="#303030"/>
<path d="M678.500 749v13" stroke="#0c2060"/>
<circle cx="767" cy="753" r="9" fill="#3a8ae8" stroke="#b8d8f8"/><path d="M770 748l-5 5 5 5" fill="none" stroke="#fff" stroke-width="2.500"/>
<path d="M786 745l2 5 5-1-3 4 3 4-5-1-2 5-2-5-5 1 3-4-3-4 5 1z" fill="#ffe820" stroke="#000"/>
<path d="M798 760l4-9 4-4 4 1-2 4v7h-3v-3l-3 4z" fill="#e8c820" stroke="#403000"/>
<rect x="821" y="746" width="7" height="7" fill="#a0c8f0"/><rect x="815" y="752" width="7" height="7" fill="#c0d8f0"/><path d="M820 753l3 3" stroke="#fff"/>
<rect x="832" y="746" width="16" height="14" fill="#fff" stroke="#103060"/><rect x="833" y="747" width="14" height="3" fill="#203860"/><path d="M835 753h10M835 756h10" stroke="#505060" stroke-dasharray="1 1"/>
<rect x="851" y="746" width="13" height="13" fill="#c8a020"/><path d="M851 749h13M851 752h13M851 755h13" stroke="#604000"/>
<path d="M869 760c2-4 5-5 6-7l5-6c-1 6-1 12-6 13z" fill="#e89030"/><path d="M875 753l5-6v6z" fill="#90b8e0"/>
<path d="M886 747h15l-8 13z" fill="#1840a0" stroke="#103060"/><path d="M890 750h8l-4 6z" fill="#6090e0"/>
<circle cx="912" cy="753" r="8" fill="#1868b8"/><path d="M906 757c4-1 8 0 12-2v4h-12z" fill="#30b040"/>
<path d="M925 747l6-2 7 2v7c0 4-4 6-7 7-3-1-6-3-6-7z" fill="#d0f0d0" stroke="#209050"/><path d="M931 749v8M927 753h8" stroke="#10a040" stroke-width="2"/>
<rect x="947" y="746" width="7" height="7" fill="#a0c8f0"/><rect x="941" y="752" width="7" height="7" fill="#c0d8f0"/>
<path d="M960 752l6-6 7 6zM960 755l6 6 7-6z" fill="#20a030"/>
</g>
</svg>

<!-- info boxes -->
<div class="ib" style="left:39px;top:132px;width:67px;height:161px;padding:0 0 0 2px;letter-spacing:-.15px">
<div style="height:16px;color:#0000ff">OP <span style="position:absolute;left:23px">2.0104</span></div>
<div style="height:16px;color:#0000ff">HI <span style="position:absolute;left:23px">2.0104</span></div>
<div style="height:16px;color:#0000ff">LO <span style="position:absolute;left:23px">2.0099</span></div>
<div style="height:16px;color:#0000ff">CL <span style="position:absolute;left:23px">2.0102</span></div>
<div style="height:16px;color:#c8dcc8">MA <span style="position:absolute;left:23px">2.0110</span><span style="position:absolute;left:11px;color:#f8f040">S</span></div>
<div style="height:16px;color:#ff00ff">MA <span style="position:absolute;left:23px">2.0105</span></div>
<div style="height:16px;color:#0000ff">MA <span style="position:absolute;left:23px">2.0120</span></div>
<div style="height:16px;color:#00e000">MA <span style="position:absolute;left:23px">2.0141</span></div>
<div style="height:16px;color:#ff0000">MA <span style="position:absolute;left:23px">2.0071</span></div>
</div>
<div class="ib" style="left:39px;top:513px;width:78px;height:32px;padding-left:1px">
<div style="color:#a8c4ec">VOL 132</div><div style="color:#00e000">MA  153.52</div>
</div>
<div class="ib" style="left:39px;top:600px;width:71px;height:39px;padding-left:1px;border-bottom:0">
<div style="color:#00e000;height:16px">ADX 14.85</div><div style="color:#0000ff;height:16px">+DM19.68</div><div style="color:#ff00ff">-DM 24.88</div>
</div>
<div class="ib" style="left:39px;top:660px;width:92px;height:33px;padding-left:1px">
<div style="color:#00e000">MCD-0.00065</div>
</div>
</div></body></html>
